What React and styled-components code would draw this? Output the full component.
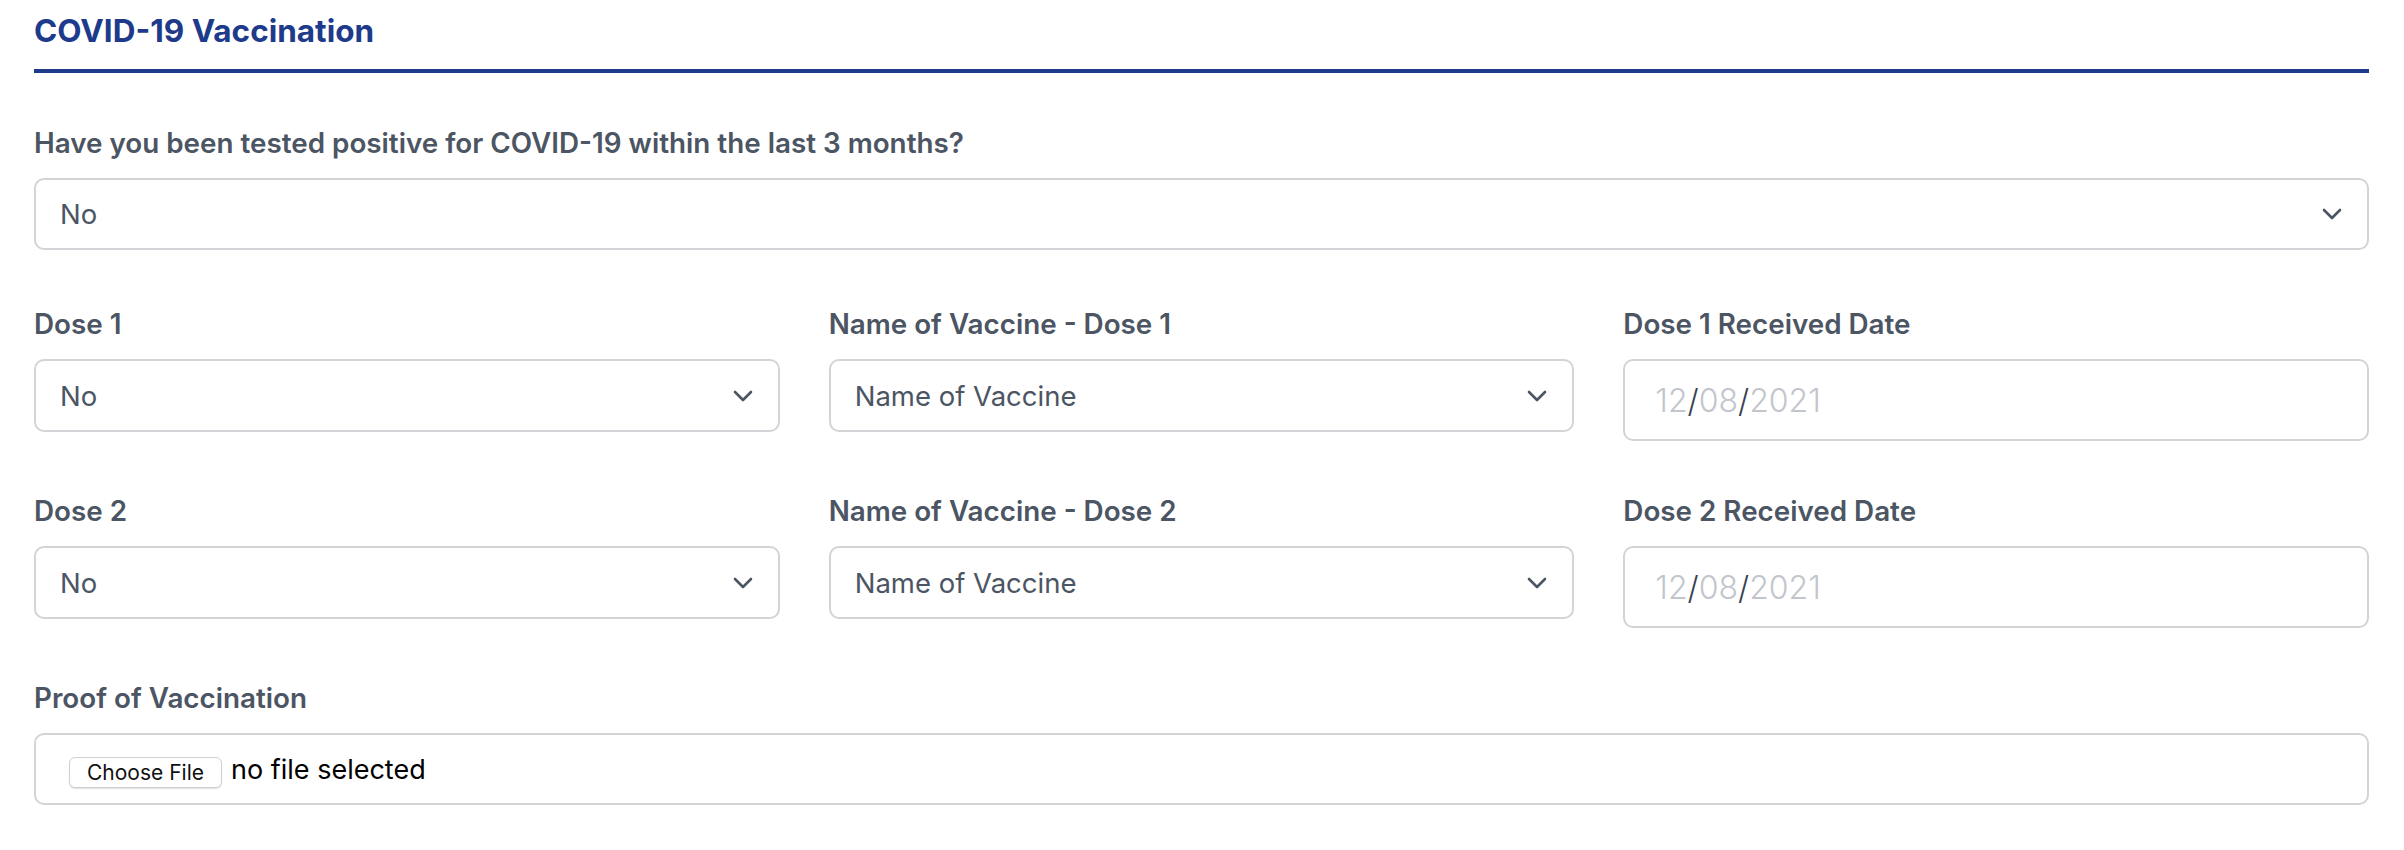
import React from "react"
import styled, { createGlobalStyle } from "styled-components"

const GlobalStyle = createGlobalStyle`
  body {
    margin: 0;
    background: #ffffff;
    font-family: Inter, "Noto Sans", sans-serif;
  }
`

const Page = styled.div`
  padding: 13px 35px 0 34px;
`

const Title = styled.h2`
  margin: 0 0 55px;
  padding-bottom: 20px;
  font-size: 31.5px;
  line-height: 36px;
  font-weight: 700;
  color: #1e3a8a;
  border-bottom: 4px solid #1e3a8a;
`

const Form = styled.div`
  display: flex;
  flex-direction: column;
  gap: 55px;
`

const Row = styled.div`
  display: grid;
  grid-template-columns: repeat(3, 1fr);
  column-gap: 49px;
  align-items: start;
`

const Field = styled.div`
  display: flex;
  flex-direction: column;
  gap: 20px;
  margin-bottom: ${({ $extra }) => $extra || 0}px;
`

const Label = styled.label`
  font-size: 27.8px;
  line-height: 30px;
  font-weight: 600;
  color: #4b5563;
`

const SelectWrap = styled.div`
  position: relative;
`

const Select = styled.select`
  appearance: none;
  width: 100%;
  height: ${({ $h }) => $h || 73}px;
  padding: 0 70px 0 24px;
  border: 2px solid #d4d4d8;
  border-radius: 10px;
  background: #ffffff;
  font-family: inherit;
  font-size: 27.5px;
  color: #4b5563;
  outline: none;
`

const Chevron = styled.svg`
  position: absolute;
  right: 27px;
  top: 50%;
  margin-top: -6px;
  width: 20px;
  height: 12px;
  pointer-events: none;
`

const DateBox = styled.div`
  display: flex;
  align-items: center;
  height: 82px;
  box-sizing: border-box;
  padding: 0 30px;
  border: 2px solid #d4d4d8;
  border-radius: 10px;
  font-size: 32px;
  font-weight: 300;
  color: #c2c6cc;
`

const Slash = styled.span`
  color: #374151;
`

const FileBox = styled.div`
  display: flex;
  align-items: center;
  height: 72px;
  box-sizing: border-box;
  padding: 0 33px;
  border: 2px solid #d4d4d8;
  border-radius: 10px;
`

const FileButton = styled.label`
  display: inline-flex;
  align-items: center;
  height: 31px;
  box-sizing: border-box;
  padding: 0 17px;
  margin-top: 6px;
  border: 1px solid #d0d0d4;
  border-radius: 6px;
  background: #ffffff;
  box-shadow: 0 1px 1px rgba(0, 0, 0, 0.12);
  font-size: 21px;
  color: #111111;
  cursor: pointer;
`

const FileText = styled.span`
  margin-left: 9px;
  font-size: 27px;
  color: #000000;
`

const HiddenInput = styled.input`
  display: none;
`

const ChevronIcon = () => (
  <Chevron viewBox="0 0 20 12" fill="none">
    <path d="M2 2 L10 10 L18 2" stroke="#4b5563" strokeWidth="2.6" strokeLinecap="round" strokeLinejoin="round" />
  </Chevron>
)

const SelectField = ({ label, options, height, extra }) => (
  <Field $extra={extra}>
    <Label>{label}</Label>
    <SelectWrap>
      <Select $h={height} defaultValue={options[0]}>
        {options.map((o) => (
          <option key={o}>{o}</option>
        ))}
      </Select>
      <ChevronIcon />
    </SelectWrap>
  </Field>
)

const DateField = ({ label, day, month, year }) => (
  <Field>
    <Label>{label}</Label>
    <DateBox>
      {day}
      <Slash>/</Slash>
      {month}
      <Slash>/</Slash>
      {year}
    </DateBox>
  </Field>
)

const doses = [1, 2]

const App = () => {
  return (
    <Page>
      <GlobalStyle />
      <Title>COVID-19 Vaccination</Title>
      <Form>
        <SelectField
          label="Have you been tested positive for COVID-19 within the last 3 months?"
          options={["No", "Yes"]}
          height={72}
          extra={4}
        />
        {doses.map((n) => (
          <Row key={n}>
            <SelectField label={`Dose ${n}`} options={["No", "Yes"]} />
            <SelectField
              label={`Name of Vaccine - Dose ${n}`}
              options={["Name of Vaccine", "Pfizer-BioNTech", "Moderna", "Johnson & Johnson"]}
            />
            <DateField label={`Dose ${n} Received Date`} day="12" month="08" year="2021" />
          </Row>
        ))}
        <Field>
          <Label>Proof of Vaccination</Label>
          <FileBox>
            <FileButton>
              Choose File
              <HiddenInput type="file" />
            </FileButton>
            <FileText>no file selected</FileText>
          </FileBox>
        </Field>
      </Form>
    </Page>
  )
}

export default App
